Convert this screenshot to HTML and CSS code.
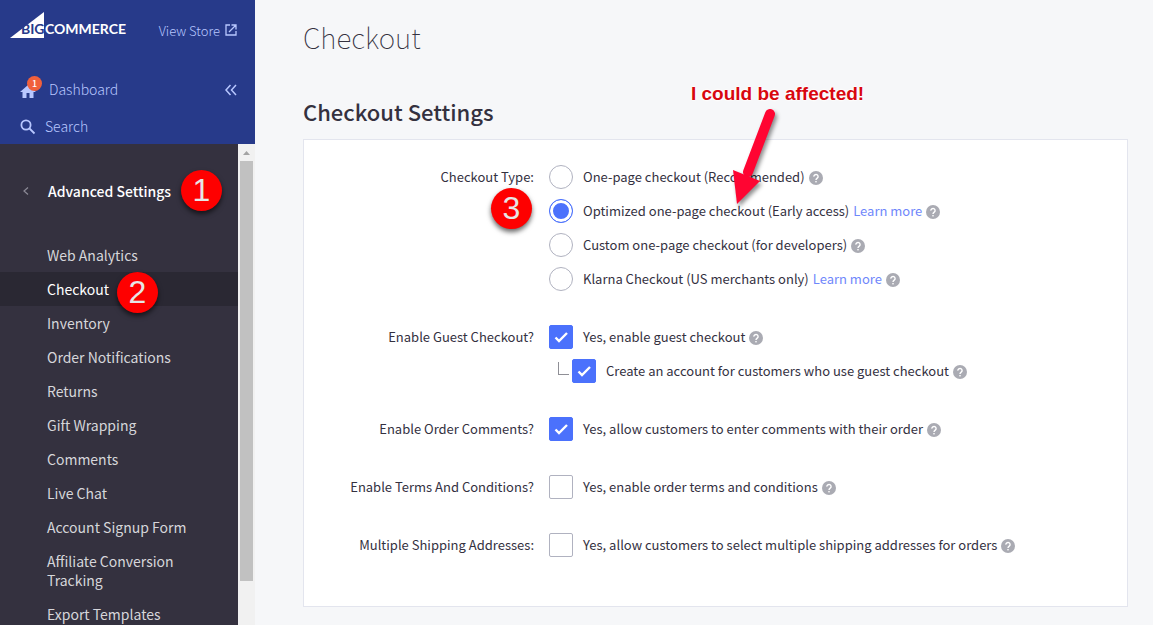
FILE: index.html
```
<!DOCTYPE html>
<html lang="en">
<head>
  <meta charset="UTF-8" />
  <meta name="viewport" content="width=device-width, initial-scale=1.0"/>
  <title>Checkout Settings</title>
  <link rel="stylesheet" href="styles.css">
</head>
<body>
  <svg class="defs" width="0" height="0" aria-hidden="true">
    <symbol id="help" viewBox="0 0 14 14">
      <circle cx="7" cy="7" r="7" fill="#aaabb3"/>
      <path d="M4.900 5.600a2.100 2 0 1 1 3.300 1.500C7.400 7.700 7 8 7 8.900" fill="none" stroke="#fff" stroke-width="1.400"/>
      <rect x="6.300" y="10" width="1.400" height="1.400" fill="#fff"/>
    </symbol>
  </svg>

  <div class="layout">
    <aside class="sidebar">
      <header class="top">
        <div class="brand">
          <a href="#" class="logo" aria-label="BigCommerce home">
            <svg width="118" height="28" viewBox="0 0 118 28">
              <path d="M0 27L34 1V27Z" fill="#fff"/>
              <text x="11" y="23" class="logo-big">BIG</text>
              <text x="35" y="23" class="logo-text">COMMERCE</text>
            </svg>
          </a>
          <a href="#" class="view-store">View Store
            <svg width="12" height="12" viewBox="0 0 12 12" fill="none" stroke="currentColor" stroke-width="1.300">
              <path d="M5 1H1V11H11V7M6.500 1H11V5.500M11 1L4 8"/>
            </svg>
          </a>
        </div>
        <div class="top-row">
          <a href="#" class="top-link">
            <span class="home">
              <svg width="18" height="18" viewBox="0 0 18 18"><path d="M8 4L0 11H2.500V17H6.500V12H9.500V17H13.500V11H16Z" fill="currentColor"/></svg>
              <span class="count">1</span>
            </span>
            Dashboard
          </a>
          <button class="collapse" aria-label="Collapse menu">
            <svg width="12" height="12" viewBox="0 0 12 12" fill="none" stroke="currentColor" stroke-width="1.500"><path d="M5.500 1L1 6L5.500 11M11 1L6.500 6L11 11"/></svg>
          </button>
        </div>
        <a href="#" class="top-link search">
          <svg width="16" height="16" viewBox="0 0 16 16" fill="none" stroke="currentColor" stroke-width="1.800"><circle cx="6" cy="6" r="4.600"/><path d="M9.500 9.500L14.500 14.500"/></svg>
          Search
        </a>
      </header>

      <div class="menu-wrap">
        <nav class="menu">
          <div class="menu-title">
            <button class="back" aria-label="Back">
              <svg width="6" height="8" viewBox="0 0 6 8" fill="none" stroke="currentColor" stroke-width="1.200"><path d="M5 0.500L1 4L5 7.500"/></svg>
            </button>
            Advanced Settings
            <span class="step step-1">1</span>
          </div>
          <a href="#">Web Analytics</a>
          <a href="#" class="active">Checkout <span class="step step-2">2</span></a>
          <a href="#">Inventory</a>
          <a href="#">Order Notifications</a>
          <a href="#">Returns</a>
          <a href="#">Gift Wrapping</a>
          <a href="#">Comments</a>
          <a href="#">Live Chat</a>
          <a href="#">Account Signup Form</a>
          <a href="#">Affiliate Conversion Tracking</a>
          <a href="#">Export Templates</a>
        </nav>
        <div class="scrollbar">
          <div class="scroll-up"></div>
          <div class="scroll-thumb"></div>
        </div>
      </div>
    </aside>

    <main class="main">
      <h1>Checkout</h1>
      <h2>Checkout Settings</h2>

      <form class="card">
        <div class="group" role="radiogroup" aria-labelledby="type-label">
          <div class="group-label" id="type-label">Checkout Type:</div>
          <div class="options">
            <div class="option">
              <input type="radio" name="type" id="type-one">
              <label for="type-one">One-page checkout (Recommended)</label>
              <svg class="help"><use href="#help"/></svg>
            </div>
            <div class="option">
              <input type="radio" name="type" id="type-optimized" checked>
              <label for="type-optimized">Optimized one-page checkout (Early access)</label>
              <a href="#">Learn more</a>
              <svg class="help"><use href="#help"/></svg>
              <span class="step step-3">3</span>
              <div class="callout">
                <span class="callout-text">I could be affected!</span>
                <svg width="60" height="108" viewBox="0 0 60 108">
                  <path d="M46 7L24 65" stroke="#ff0532" stroke-width="10" stroke-linecap="round"/>
                  <path d="M9 63L13 97L36 74Z" fill="#ff0532"/>
                </svg>
              </div>
            </div>
            <div class="option">
              <input type="radio" name="type" id="type-custom">
              <label for="type-custom">Custom one-page checkout (for developers)</label>
              <svg class="help"><use href="#help"/></svg>
            </div>
            <div class="option">
              <input type="radio" name="type" id="type-klarna">
              <label for="type-klarna">Klarna Checkout (US merchants only)</label>
              <a href="#">Learn more</a>
              <svg class="help"><use href="#help"/></svg>
            </div>
          </div>
        </div>

        <div class="group">
          <div class="group-label">Enable Guest Checkout?</div>
          <div class="options">
            <div class="option">
              <input type="checkbox" id="guest" checked>
              <label for="guest">Yes, enable guest checkout</label>
              <svg class="help"><use href="#help"/></svg>
            </div>
            <div class="option nested">
              <span class="branch"></span>
              <input type="checkbox" id="account" checked>
              <label for="account">Create an account for customers who use guest checkout</label>
              <svg class="help"><use href="#help"/></svg>
            </div>
          </div>
        </div>

        <div class="group">
          <div class="group-label">Enable Order Comments?</div>
          <div class="options">
            <div class="option">
              <input type="checkbox" id="comments" checked>
              <label for="comments">Yes, allow customers to enter comments with their order</label>
              <svg class="help"><use href="#help"/></svg>
            </div>
          </div>
        </div>

        <div class="group">
          <div class="group-label">Enable Terms And Conditions?</div>
          <div class="options">
            <div class="option">
              <input type="checkbox" id="terms">
              <label for="terms">Yes, enable order terms and conditions</label>
              <svg class="help"><use href="#help"/></svg>
            </div>
          </div>
        </div>

        <div class="group">
          <div class="group-label">Multiple Shipping Addresses:</div>
          <div class="options">
            <div class="option">
              <input type="checkbox" id="shipping">
              <label for="shipping">Yes, allow customers to select multiple shipping addresses for orders</label>
              <svg class="help"><use href="#help"/></svg>
            </div>
          </div>
        </div>
      </form>
    </main>
  </div>
</body>
</html>
```

FILE: styles.css
```
* {
  box-sizing: border-box;
}
body {
  margin: 0;
  font-family: "Noto Sans CJK SC", "Open Sans", sans-serif;
  font-size: 14px;
  line-height: 19px;
  color: #34313f;
  background-color: #f6f7f9;
}
a {
  color: #6f87fb;
  text-decoration: none;
}
button {
  padding: 0;
  border: none;
  background: none;
  color: inherit;
  cursor: pointer;
}
svg {
  display: block;
  flex: none;
}
.defs {
  position: absolute;
}
.layout {
  display: flex;
  height: 100vh;
  overflow: hidden;
}

/* sidebar */
.sidebar {
  display: flex;
  flex-direction: column;
  flex: none;
  width: 255px;
}
.top {
  flex: none;
  height: 144px;
  padding: 11px 18px 0 20px;
  background-color: #273a8a;
  color: #b8c7ff;
  font-weight: 300;
}
.brand {
  display: flex;
  justify-content: space-between;
  align-items: center;
  height: 38px;
  margin-left: -10px;
}
.logo {
  align-self: flex-start;
}
.logo-big,
.logo-text {
  font-family: Lato, sans-serif;
  font-size: 14px;
  font-weight: 700;
  fill: #fff;
}
.logo-big {
  fill: #273a8a;
}
.view-store,
.top-link {
  display: flex;
  align-items: center;
  color: inherit;
}
.view-store {
  gap: 5px;
  font-size: 13px;
}
.top-row {
  display: flex;
  justify-content: space-between;
  align-items: center;
  margin-top: 31px;
}
.home {
  position: relative;
  margin-right: 11px;
}
.count {
  position: absolute;
  top: -5px;
  left: 7px;
  width: 15px;
  height: 15px;
  border-radius: 50%;
  background-color: #f0603c;
  color: #fff;
  font-size: 9px;
  font-weight: 500;
  line-height: 15px;
  text-align: center;
}
.search {
  margin-top: 18px;
  gap: 9px;
}
.menu-wrap {
  display: flex;
  flex: 1;
  min-height: 0;
}
.menu {
  flex: 1;
  overflow: hidden;
  background-color: #34313f;
}
.menu a {
  display: block;
  padding: 8px 47px 7px;
  color: #d6d6da;
}
.menu .active {
  position: relative;
  background-color: #2a2833;
  color: #fff;
}
.menu-title {
  position: relative;
  display: flex;
  align-items: center;
  height: 94px;
  padding-left: 23px;
  color: #fff;
  font-weight: 500;
}
.back {
  width: 25px;
  color: #8c8a96;
}
.scrollbar {
  width: 17px;
  padding: 0 2px;
  background-color: #f1f1f1;
}
.scroll-up {
  height: 17px;
  background: linear-gradient(#a3a3a3, #a3a3a3) no-repeat 3px 7px / 7px 4px;
  clip-path: polygon(50% 7px, 10px 11px, 3px 11px);
}
.scroll-thumb {
  height: 420px;
  background-color: #c1c1c1;
}

/* content */
.main {
  flex: 1;
  padding: 17px 25px 0 48px;
}
h1 {
  margin: 0;
  font-size: 28px;
  font-weight: 100;
  line-height: 40px;
}
h2 {
  margin: 37px 0 11px;
  font-size: 22px;
  font-weight: 500;
  line-height: 34px;
}
.card {
  display: flex;
  flex-direction: column;
  gap: 34px;
  padding: 25px 0 49px;
  border: 1px solid #e3e5ee;
  background-color: #fff;
  font-size: 13px;
}
.group {
  display: flex;
  gap: 15px;
  line-height: 24px;
}
.group-label {
  flex: none;
  width: 230px;
  text-align: right;
}
.options {
  display: flex;
  flex-direction: column;
  gap: 10px;
}
.option {
  position: relative;
  display: flex;
  align-items: center;
  gap: 4px;
  white-space: nowrap;
}
.option input {
  appearance: none;
  flex: none;
  width: 24px;
  height: 24px;
  margin: 0 6px 0 0;
  border: 1px solid #b0b2c0;
  border-radius: 2px;
  background-color: #fff;
}
.option input[type="radio"] {
  border-radius: 50%;
}
.option input[type="radio"]:checked {
  border-color: #4b71fc;
  background-color: #4b71fc;
  box-shadow: inset 0 0 0 3px #fff;
}
.option input[type="checkbox"]:checked {
  border-color: #4b71fc;
  background: #4b71fc url("data:image/svg+xml,%3Csvg xmlns='http://www.w3.org/2000/svg' viewBox='0 0 22 22'%3E%3Cpath d='M5.500 11.500L9 15L17 7' fill='none' stroke='%23fff' stroke-width='2.400'/%3E%3C/svg%3E");
}
.nested {
  padding-left: 9px;
}
.branch {
  width: 11px;
  height: 13px;
  margin-right: -1px;
  margin-bottom: 5px;
  border: solid #8f8f96;
  border-width: 0 0 1px 1px;
}
.help {
  width: 14px;
  height: 14px;
  margin-top: 2px;
}

/* annotations */
.step {
  position: absolute;
  width: 41px;
  height: 41px;
  border-radius: 50%;
  background-color: #fe0000;
  box-shadow: 0 3px 5px rgba(0, 0, 0, 0.6);
  color: #e6e6e6;
  font-family: "Liberation Sans", Arial, sans-serif;
  font-size: 32px;
  font-weight: 400;
  line-height: 41px;
  text-align: center;
}
.step-1 {
  top: 26px;
  left: 181px;
}
.step-2 {
  z-index: 1;
  top: 0;
  left: 117px;
}
.step-3 {
  top: -11px;
  left: -58px;
}
.callout {
  position: absolute;
  top: -117px;
  left: 142px;
}
.callout-text {
  color: #d8070f;
  font-family: "Liberation Sans", Arial, sans-serif;
  font-size: 19px;
  font-weight: 700;
  text-shadow: 0 0 2px #fff, 0 0 2px #fff, 0 0 3px #fff, 0 0 3px #fff;
}
.callout svg {
  margin-left: 33px;
  filter: drop-shadow(2px 3px 2px rgba(0, 0, 0, 0.45));
}
```
